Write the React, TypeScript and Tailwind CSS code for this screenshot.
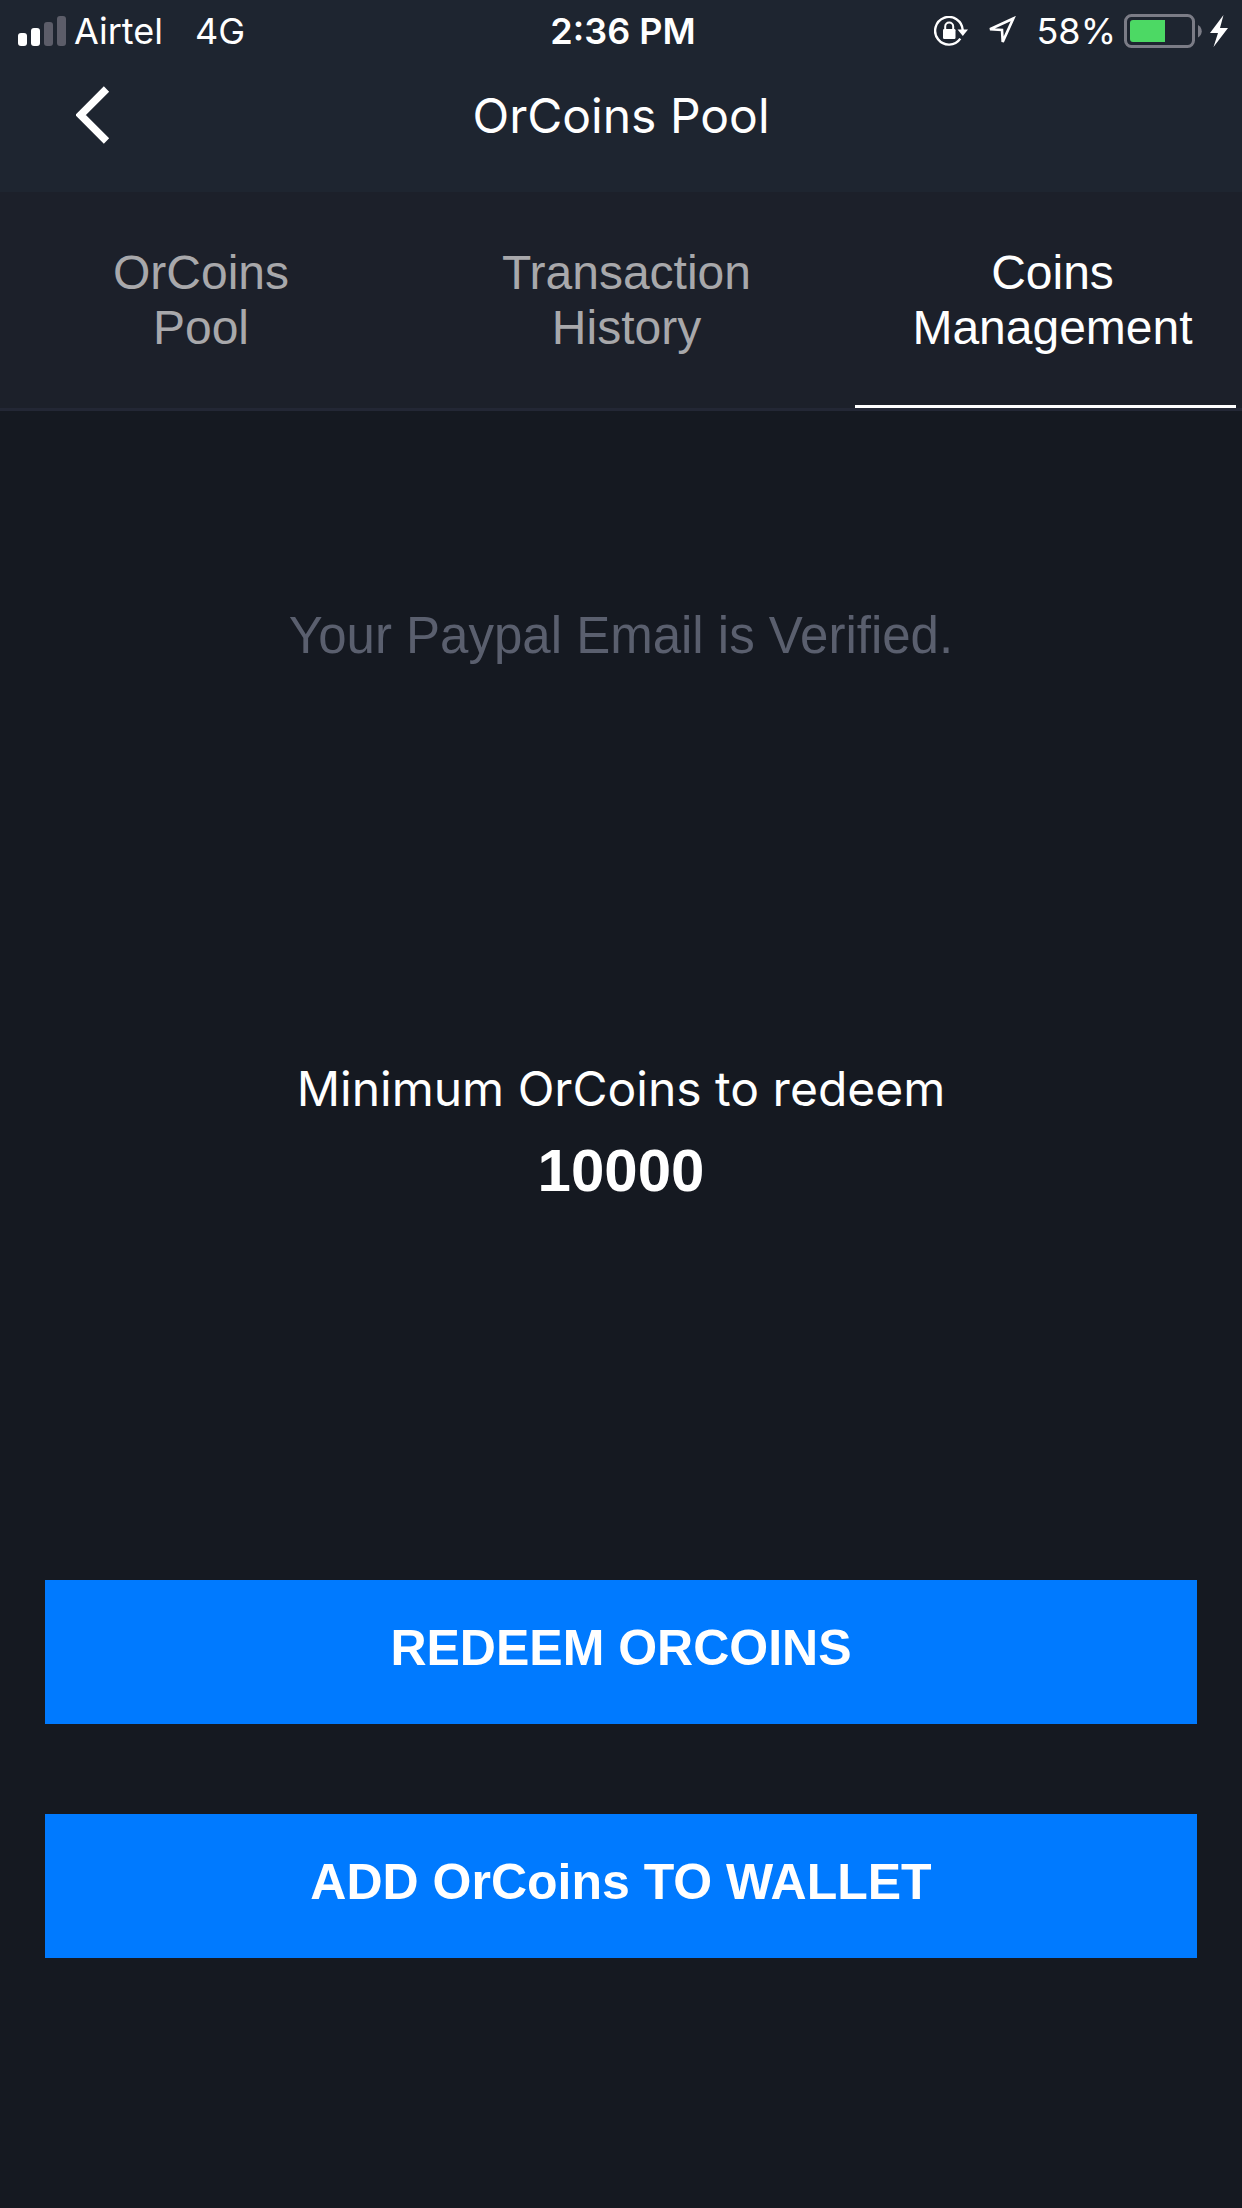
import { useState } from "react";

const tabs = [
  { first: "OrCoins", second: "Pool" },
  { first: "Transaction", second: "History" },
  { first: "Coins", second: "Management" },
];

function SignalIcon() {
  return (
    <svg width="48" height="30" viewBox="0 0 48 30" aria-hidden="true">
      <rect x="0" y="17" width="9" height="13" rx="3" fill="#fff" />
      <rect x="13" y="12" width="9" height="18" rx="3" fill="#fff" />
      <rect x="26" y="6" width="9" height="24" rx="3" fill="#5c5d69" />
      <rect x="39" y="0" width="9" height="30" rx="3" fill="#5c5d69" />
    </svg>
  );
}

function RotationLockIcon() {
  return (
    <svg width="34" height="30" viewBox="0 0 34 30" fill="none" aria-hidden="true">
      <path d="M26.300 22.600A13.800 13.800 0 1 1 28.700 14" stroke="#fff" strokeWidth="2.400" />
      <path d="M23.500 13.500h10.500l-5.200 6.500z" fill="#fff" />
      <rect x="9" y="13" width="12.500" height="10" rx="1.200" fill="#fff" />
      <path d="M11.200 14v-3.500a4 4 0 0 1 8 0V14" stroke="#fff" strokeWidth="2" />
    </svg>
  );
}

function LocationIcon() {
  return (
    <svg width="30" height="30" viewBox="0 0 30 30" fill="none" aria-hidden="true">
      <path d="M27.300 2.500L4 13.300l12 .6.700 12z" stroke="#fff" strokeWidth="2.600" />
    </svg>
  );
}

function BatteryIcon() {
  return (
    <svg width="78" height="34" viewBox="0 0 78 34" fill="none" aria-hidden="true">
      <rect x="1.500" y="1.500" width="68" height="31" rx="6" stroke="#7b7c86" strokeWidth="3" />
      <path d="M41 6H9a3 3 0 0 0-3 3v16a3 3 0 0 0 3 3h32z" fill="#4cd964" />
      <path d="M74 11c5 3 5 9.500 0 12.500z" fill="#7b7c86" />
    </svg>
  );
}

function BoltIcon() {
  return (
    <svg width="18" height="32" viewBox="0 0 18 32" aria-hidden="true">
      <path d="M13.500 0L0 18h8L3.500 32 18 13h-8z" fill="#fff" />
    </svg>
  );
}

function StatusBar() {
  return (
    <div className="grid h-[62px] grid-cols-[1fr_auto_1fr] items-center pr-[14px] pl-[18px] text-[36px] leading-none">
      <div className="flex items-center">
        <SignalIcon />
        <span className="ml-2">Airtel</span>
        <span className="ml-8">4G</span>
      </div>
      <span className="font-semibold">2:36 PM</span>
      <div className="flex items-center justify-end">
        <RotationLockIcon />
        <span className="ml-[18px]">
          <LocationIcon />
        </span>
        <span className="ml-5">58%</span>
        <span className="ml-2">
          <BatteryIcon />
        </span>
        <span className="ml-2">
          <BoltIcon />
        </span>
      </div>
    </div>
  );
}

const buttonClass =
  "block w-full bg-[#007aff] pt-[38px] pb-[46px] text-center text-[50px] font-bold leading-[60px]";

export default function App() {
  const [active, setActive] = useState(2);

  return (
    <div className="min-h-screen bg-[#151921] font-['Liberation_Sans',Arial,sans-serif] text-white">
      <header className="bg-[#1e2530] font-[Inter,sans-serif]">
        <StatusBar />
        <div className="grid h-[130px] grid-cols-[1fr_auto_1fr] items-start pt-6">
          <button type="button" aria-label="Back" className="ml-[76px] justify-self-start">
            <svg width="34" height="58" viewBox="0 0 34 58" fill="none" aria-hidden="true">
              <path d="M30.500 3L4.500 29l26 26" stroke="#fff" strokeWidth="7.500" />
            </svg>
          </button>
          <h1 className="text-[48px] leading-[60px]">OrCoins Pool</h1>
        </div>
      </header>

      <nav
        role="tablist"
        className="grid grid-cols-[402fr_449fr_391fr] border-b-[3px] border-[#232735] bg-[#1c202a]"
      >
        {tabs.map((tab, i) => (
          <button
            key={tab.second}
            type="button"
            role="tab"
            aria-selected={active === i}
            onClick={() => setActive(i)}
            className={`relative pt-[53px] pb-[53px] text-center text-[48px] leading-[55px] last:pl-3 ${
              active === i ? "text-white" : "text-[#a8a8ab]"
            }`}
          >
            {tab.first}
            <br />
            {tab.second}
            {active === i && <span className="absolute right-[6px] bottom-0 left-1 h-[3px] bg-white" />}
          </button>
        ))}
      </nav>

      <main className="px-[45px] pb-12 text-center">
        <p className="pt-[195px] text-[51px] leading-[60px] text-[#5a5f6e]">Your Paypal Email is Verified.</p>
        <p className="mt-[393px] font-[Inter,sans-serif] text-[48px] leading-[60px]">Minimum OrCoins to redeem</p>
        <p className="mt-4 text-[60px] font-bold leading-[72px]">10000</p>
        <div className="mt-[373px] flex flex-col gap-[90px]">
          <button type="button" className={buttonClass}>
            REDEEM ORCOINS
          </button>
          <button type="button" className={buttonClass}>
            ADD OrCoins TO WALLET
          </button>
        </div>
      </main>
    </div>
  );
}
